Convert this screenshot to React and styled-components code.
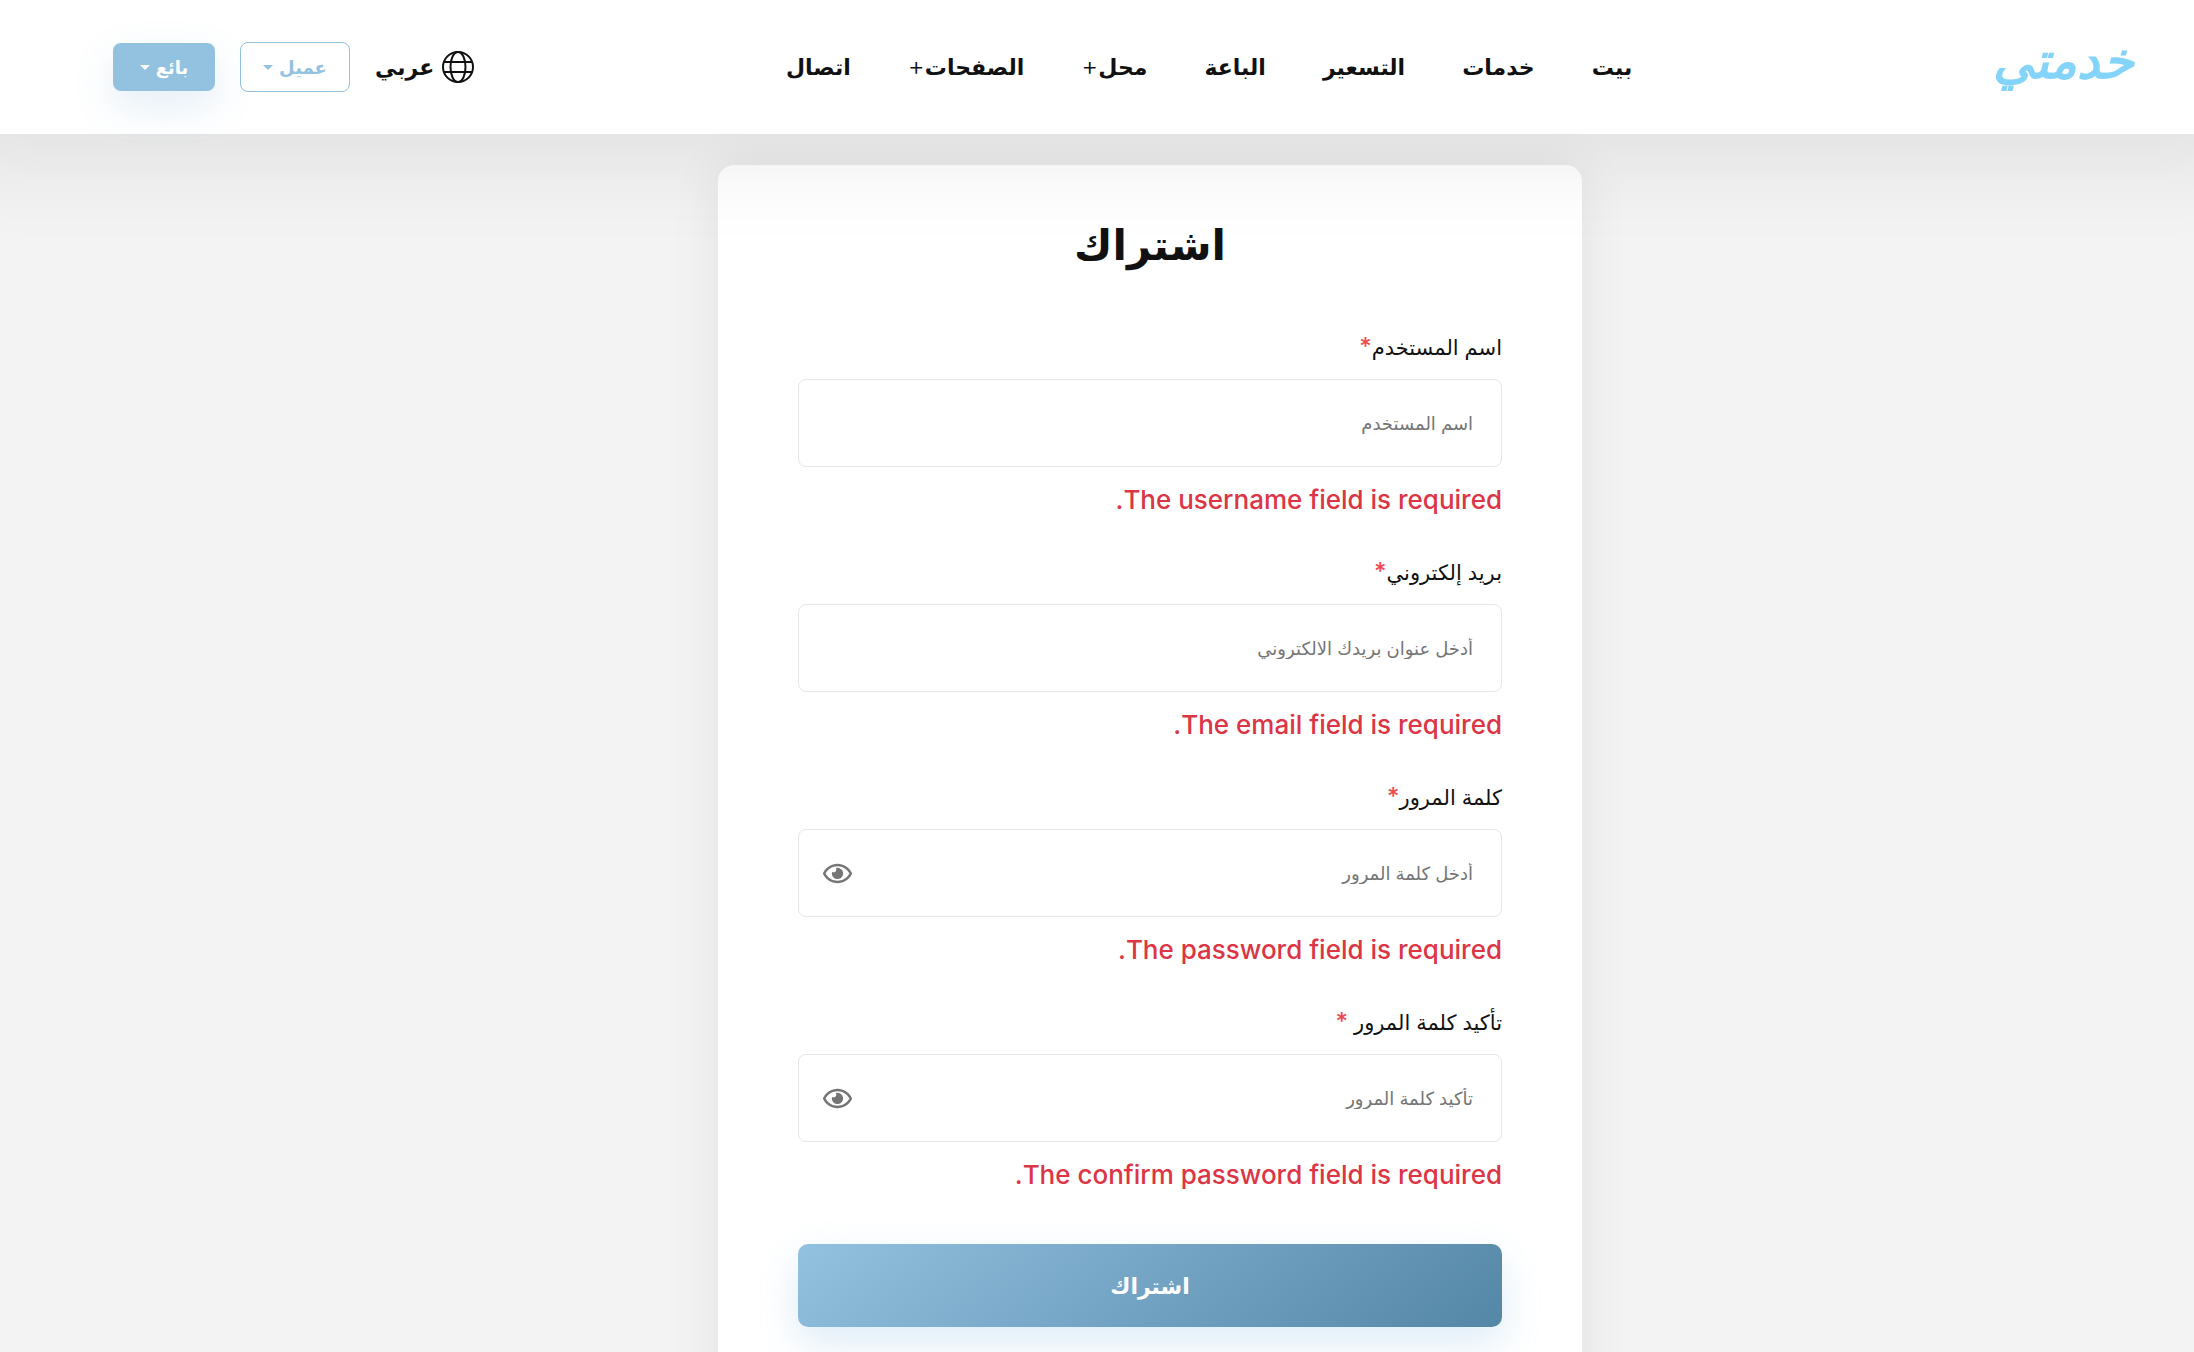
import React, { useState } from "react";
import styled, { createGlobalStyle } from "styled-components";
import { FaRegEye } from "react-icons/fa";

const GlobalStyle = createGlobalStyle`
  * {
    box-sizing: border-box;
  }
  body {
    margin: 0;
    background: #f3f3f3;
    color: #111;
    font-family: Inter, "DejaVu Sans", sans-serif;
  }
  button, input {
    font-family: inherit;
  }
`;

const Header = styled.header`
  position: relative;
  z-index: 2;
  display: flex;
  align-items: center;
  justify-content: space-between;
  height: 134px;
  padding: 0 60px 0 113px;
  background: #fff;
  box-shadow: 0 -30px 90px 60px rgba(0, 0, 0, 0.074);
`;

const Logo = styled.a`
  width: 190px;
  padding-bottom: 14px;
  color: #84d4fa;
  font-size: 50px;
  font-style: italic;
  font-weight: 700;
  line-height: 60px;
  text-decoration: none;
`;

const Nav = styled.nav`
  display: flex;
  align-items: baseline;
  gap: 57px;
`;

const NavLink = styled.a`
  color: #111;
  font-size: 22px;
  font-weight: 700;
  line-height: 32px;
  text-decoration: none;
  white-space: nowrap;
`;

const Plus = styled.span`
  font-size: 26px;
  font-weight: 300;
  line-height: 20px;
`;

const Actions = styled.div`
  display: flex;
  align-items: center;
  gap: 25px;
`;

const Language = styled.button`
  display: flex;
  align-items: center;
  gap: 8px;
  padding: 0;
  border: 0;
  background: none;
  color: #111;
  font-size: 22px;
  font-weight: 700;
  line-height: 32px;
`;

const MenuButton = styled.button`
  display: flex;
  align-items: center;
  justify-content: center;
  gap: 6px;
  min-width: ${(props) => (props.$filled ? 102 : 110)}px;
  height: ${(props) => (props.$filled ? 48 : 50)}px;
  border: ${(props) => (props.$filled ? "0" : "1px solid #93c1e0")};
  border-radius: 8px;
  background: ${(props) => (props.$filled ? "#93c1e0" : "#fff")};
  color: ${(props) => (props.$filled ? "#fff" : "#93c1e0")};
  font-size: 18px;
  font-weight: 700;
  box-shadow: ${(props) =>
    props.$filled ? "0 16px 40px rgba(84, 148, 200, 0.16)" : "none"};
`;

const Caret = styled.span`
  border-top: 5px solid currentColor;
  border-right: 5px solid transparent;
  border-left: 5px solid transparent;
`;

const Main = styled.main`
  display: flex;
  justify-content: center;
  padding: 31px 0 60px 106px;
`;

const Card = styled.section`
  width: 100%;
  max-width: 864px;
  padding: 40px 80px 80px;
  border-radius: 16px;
  background: #fff;
  box-shadow: 0 0 50px rgba(0, 0, 0, 0.08);
`;

const Title = styled.h1`
  margin: 0 0 48px;
  font-size: 42px;
  font-weight: 700;
  line-height: 80px;
  text-align: center;
`;

const Field = styled.div`
  margin-bottom: 40px;
`;

const Label = styled.label`
  display: block;
  margin-bottom: 16px;
  font-size: 21px;
  line-height: 30px;
`;

const Required = styled.span`
  color: #ef4b4f;
  font-size: 24px;
  font-weight: 500;
  line-height: 20px;
`;

const InputBox = styled.div`
  display: flex;
  align-items: center;
  height: 88px;
  padding: 0 28px 0 24px;
  border: 1px solid #e6e6e6;
  border-radius: 8px;
  background: #fff;
`;

const Input = styled.input`
  flex: 1;
  min-width: 0;
  height: 100%;
  padding: 0;
  border: 0;
  outline: 0;
  background: none;
  font-size: 18px;
  &::placeholder {
    color: #757575;
    opacity: 1;
  }
`;

const EyeButton = styled.button`
  display: flex;
  padding: 0;
  border: 0;
  background: none;
  color: #757575;
  font-size: 29px;
`;

const ErrorText = styled.p`
  margin: 15px 0 0;
  color: #dc3545;
  font-size: 26px;
  font-weight: 500;
  line-height: 36px;
`;

const SubmitButton = styled.button`
  display: block;
  width: 100%;
  height: 83px;
  margin-top: 51px;
  border: 0;
  border-radius: 10px;
  background: linear-gradient(140deg, #93c1e0, #5486a6);
  color: #fff;
  font-size: 22px;
  font-weight: 700;
  box-shadow: 0 16px 40px rgba(84, 160, 214, 0.2);
`;

const links = [
  { text: "بيت" },
  { text: "خدمات" },
  { text: "التسعير" },
  { text: "الباعة" },
  { text: "محل", plus: true },
  { text: "الصفحات", plus: true },
  { text: "اتصال" },
];

const fields = [
  {
    id: "username",
    label: "اسم المستخدم",
    placeholder: "اسم المستخدم",
    error: "The username field is required.",
  },
  {
    id: "email",
    label: "بريد إلكتروني",
    placeholder: "أدخل عنوان بريدك الالكتروني",
    error: "The email field is required.",
  },
  {
    id: "password",
    label: "كلمة المرور",
    placeholder: "أدخل كلمة المرور",
    error: "The password field is required.",
    secret: true,
  },
  {
    id: "password_confirmation",
    label: "تأكيد كلمة المرور ",
    placeholder: "تأكيد كلمة المرور",
    error: "The confirm password field is required.",
    secret: true,
  },
];

const GlobeIcon = () => (
  <svg width="32" height="32" viewBox="0 0 32 32" fill="none" stroke="currentColor" strokeWidth="2" aria-hidden="true">
    <circle cx="16" cy="16" r="15" />
    <path d="M16 1C11.500 1 8.500 8 8.500 16S11.500 31 16 31S23.500 24 23.500 16S20.500 1 16 1Z" />
    <path d="M2 11H30M2 21H30" />
  </svg>
);

const FormField = ({ field }) => {
  const [value, setValue] = useState("");
  const [visible, setVisible] = useState(false);

  return (
    <Field>
      <Label htmlFor={field.id}>
        {field.label}
        <Required>*</Required>
      </Label>
      <InputBox>
        <Input
          id={field.id}
          name={field.id}
          type={field.secret && !visible ? "password" : "text"}
          placeholder={field.placeholder}
          value={value}
          onChange={(event) => setValue(event.target.value)}
        />
        {field.secret && (
          <EyeButton
            type="button"
            aria-label={field.label}
            onClick={() => setVisible(!visible)}
          >
            <FaRegEye />
          </EyeButton>
        )}
      </InputBox>
      <ErrorText>{field.error}</ErrorText>
    </Field>
  );
};

const App = () => {
  return (
    <div dir="rtl" lang="ar">
      <GlobalStyle />
      <Header>
        <Logo href="#">خدمتي</Logo>
        <Nav>
          {links.map((link) => (
            <NavLink key={link.text} href="#">
              {link.text}
              {link.plus && <Plus>+</Plus>}
            </NavLink>
          ))}
        </Nav>
        <Actions>
          <Language type="button">
            <GlobeIcon />
            عربي
          </Language>
          <MenuButton type="button">
            عميل
            <Caret />
          </MenuButton>
          <MenuButton type="button" $filled>
            بائع
            <Caret />
          </MenuButton>
        </Actions>
      </Header>
      <Main>
        <Card>
          <Title>اشتراك</Title>
          <form onSubmit={(event) => event.preventDefault()}>
            {fields.map((field) => (
              <FormField key={field.id} field={field} />
            ))}
            <SubmitButton type="submit">اشتراك</SubmitButton>
          </form>
        </Card>
      </Main>
    </div>
  );
};

export default App;
